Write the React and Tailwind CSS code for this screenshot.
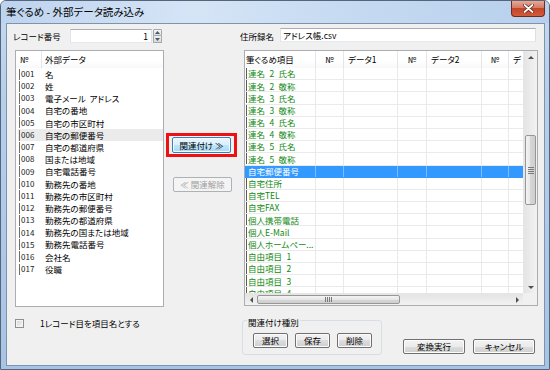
import React from "react";

const FONT = "font-['Noto_Sans_CJK_JP',sans-serif] [font-feature-settings:'palt']";

const leftRows = [
  ["001", "名"], ["002", "姓"], ["003", "電子メール アドレス"], ["004", "自宅の番地"],
  ["005", "自宅の市区町村"], ["006", "自宅の郵便番号"], ["007", "自宅の都道府県"],
  ["008", "国または地域"], ["009", "自宅電話番号"], ["010", "勤務先の番地"],
  ["011", "勤務先の市区町村"], ["012", "勤務先の郵便番号"], ["013", "勤務先の都道府県"],
  ["014", "勤務先の国または地域"], ["015", "勤務先電話番号"], ["016", "会社名"], ["017", "役職"],
];

const rightRows = [
  "連名 2 氏名", "連名 2 敬称", "連名 3 氏名", "連名 3 敬称", "連名 4 氏名", "連名 4 敬称",
  "連名 5 氏名", "連名 5 敬称", "自宅郵便番号", "自宅住所", "自宅TEL", "自宅FAX",
  "個人携帯電話", "個人E-Mail", "個人ホームペー...", "自由項目 1", "自由項目 2", "自由項目 3", "自由項目 4",
];

const cols = [71, 28, 54, 29, 55, 27, 55];
const headers = [
  { t: "筆ぐるめ項目", c: "pl-[1px]" },
  { t: "№", c: "justify-center" },
  { t: "データ1", c: "pl-[4px]" },
  { t: "№", c: "justify-center" },
  { t: "データ2", c: "pl-[4px]" },
  { t: "№", c: "justify-center" },
  { t: "デ", c: "pl-[4px]" },
];

const BTN =
  "flex items-center justify-center rounded-[2px] border border-[#707070] bg-[linear-gradient(#f2f2f2,#ebebeb_50%,#dddddd_50%,#cfcfcf)] text-[8.5px] text-black shadow-[inset_0_0_0_1px_#fcfcfc]";

function Tri({ dir }) {
  const pts = {
    up: "0,4 3,1 6,4",
    down: "0,1 3,4 6,1",
    left: "4,0 1,3 4,6",
    right: "1,0 4,3 1,6",
  }[dir];
  const w = dir === "up" || dir === "down" ? 6 : 5;
  const h = dir === "up" || dir === "down" ? 5 : 6;
  return (
    <svg width={w} height={h} viewBox={`0 0 ${w} ${h}`}>
      <polygon points={pts} fill="#505050" />
    </svg>
  );
}

function VScroll() {
  return (
    <div className="w-[14px] h-full flex flex-col shrink-0 bg-[linear-gradient(to_right,#e4e4e4,#f2f2f2)] border-l border-[#e6e6e6]">
      <div className="h-[12px] flex items-center justify-center shrink-0">
        <Tri dir="up" />
      </div>
      <div className="flex-1">
        <div className="mt-[72px] mx-[1px] h-[70px] rounded-[2px] border border-[#979797] bg-[linear-gradient(to_right,#f4f4f4,#e6e6e6_50%,#d6d6d6_50%,#cfcfcf)] flex flex-col items-center justify-center gap-[1px]">
          <div className="w-[6px] h-[1px] bg-[#7a7a7a]" />
          <div className="w-[6px] h-[1px] bg-[#7a7a7a]" />
          <div className="w-[6px] h-[1px] bg-[#7a7a7a]" />
          <div className="w-[6px] h-[1px] bg-[#7a7a7a]" />
        </div>
      </div>
      <div className="h-[12px] flex items-center justify-center shrink-0">
        <Tri dir="down" />
      </div>
    </div>
  );
}

function HScroll() {
  return (
    <div className="w-[278px] h-full flex items-stretch bg-[linear-gradient(#e4e4e4,#f2f2f2)] border-t border-[#e6e6e6]">
      <div className="w-[12px] flex items-center justify-center shrink-0">
        <Tri dir="left" />
      </div>
      <div className="flex-1 flex items-stretch py-[1px]">
        <div className="w-[143px] rounded-[2px] border border-[#979797] bg-[linear-gradient(#f4f4f4,#e6e6e6_50%,#d6d6d6_50%,#cfcfcf)] flex items-center justify-center gap-[1px]">
          <div className="w-[1px] h-[5px] bg-[#7a7a7a]" />
          <div className="w-[1px] h-[5px] bg-[#7a7a7a]" />
          <div className="w-[1px] h-[5px] bg-[#7a7a7a]" />
          <div className="w-[1px] h-[5px] bg-[#7a7a7a]" />
        </div>
      </div>
      <div className="w-[12px] flex items-center justify-center shrink-0">
        <Tri dir="right" />
      </div>
    </div>
  );
}

function LeftList() {
  return (
    <div className="ml-[8px] w-[149px] h-[257px] shrink-0 border border-[#abadb3] bg-white flex flex-col overflow-hidden">
      <div className="h-[17px] flex shrink-0 bg-[linear-gradient(#ffffff,#ffffff_60%,#f7f8f9)]">
        <div className="w-[26px] border-r border-[#e3e6ea] pl-[4px] flex items-center">№</div>
        <div className="flex-1 pl-[3px] flex items-center">外部データ</div>
      </div>
      {leftRows.map(([n, t], i) => (
        <div
          key={n}
          className={`flex items-center h-[12.2px] ml-[2px] shrink-0 ${i === 5 ? "bg-[#ebebeb]" : ""}`}
        >
          <span className="ml-[1px] w-[1px] h-[11px] bg-[#6e6e6e]" />
          <span className="ml-[1px] w-[24px] text-[8px] text-[#222]">{n}</span>
          <span className="[word-spacing:2px]">{t}</span>
        </div>
      ))}
    </div>
  );
}

function RightList() {
  return (
    <div className="w-[294px] h-[256px] shrink-0 border border-[#abadb3] bg-white flex flex-col">
      <div className="flex h-[242px]">
        <div className="w-[278px] overflow-hidden flex flex-col">
          <div className="h-[17px] flex shrink-0 bg-[linear-gradient(#ffffff,#ffffff_60%,#f7f8f9)]">
            {headers.map((h, i) => (
              <div
                key={i}
                style={{ width: cols[i] }}
                className={`shrink-0 flex items-center border-r border-[#e3e6ea] whitespace-nowrap ${h.c}`}
              >
                {h.t}
              </div>
            ))}
          </div>
          {rightRows.map((t, r) => {
            const sel = r === 8;
            return (
              <div
                key={r}
                className={`flex h-[12.2px] shrink-0 border-b ${sel ? "bg-[#3399ff] text-white border-[#3399ff]" : "border-[#eaeaea] text-[#128a12]"}`}
              >
                {cols.map((w, i) => (
                  <div
                    key={i}
                    style={{ width: w }}
                    className={`shrink-0 h-full flex items-center whitespace-nowrap border-r ${sel ? "border-[#7dbdff]" : "border-[#eaeaea]"}`}
                  >
                    {i === 0 && (
                      <>
                        <span className={`ml-[1px] w-[1px] h-[11px] ${sel ? "bg-[#3399ff]" : "bg-[#5a5a5a]"}`} />
                        <span className="ml-[1px] whitespace-pre [word-spacing:2.5px]">{t}</span>
                      </>
                    )}
                  </div>
                ))}
              </div>
            );
          })}
        </div>
        <VScroll />
      </div>
      <div className="flex h-[12px] shrink-0">
        <HScroll />
        <div className="w-[14px] bg-[#f0f0f0]" />
      </div>
    </div>
  );
}

export default function App() {
  return (
    <div className={`w-[550px] h-[370px] ${FONT} text-[8.5px] leading-none text-black`}>
      <div className="w-full h-full flex flex-col rounded-t-[6px] border border-[#55657b] bg-[linear-gradient(to_bottom,#c6daf1,#b6cfeb_25%,#a8c4e5)] overflow-hidden">
        {/* title bar */}
        <div className="h-[22px] flex items-start justify-between shrink-0 bg-[linear-gradient(to_right,#bdd3ee,#d6e5f6_35%,#c7dbf2_60%,#b8d0ed)]">
          <div className="h-[22px] flex items-center pl-[5px] text-[10.5px] text-black">
            筆ぐるめ - 外部データ読み込み
          </div>
          <div className="mr-[4px] w-[34px] h-[16px] rounded-b-[4px] border border-t-0 border-[#6b2a22] bg-[linear-gradient(#e9a995,#d47a62_45%,#c2462b_50%,#d45a3a)] flex items-center justify-center">
            <svg width="11" height="9" viewBox="0 0 11 9">
              <path d="M1.5 1 L9.5 8 M9.5 1 L1.5 8" stroke="#5a2018" strokeWidth="3.2" strokeLinecap="round" />
              <path d="M1.5 1 L9.5 8 M9.5 1 L1.5 8" stroke="#ffffff" strokeWidth="1.8" strokeLinecap="round" />
            </svg>
          </div>
        </div>

        {/* client area */}
        <div className="ml-[5px] mr-[4px] mb-[3px] flex-1 border border-[#7f93ac] bg-[#f0f0f0] flex flex-col">
          {/* row 1 */}
          <div className="h-[26px] flex items-start shrink-0">
            <div className="ml-[6px] w-[57px] h-[14px] mt-[5px] flex items-center">レコード番号</div>
            <div className="w-[82px] h-[14px] mt-[5px] border border-[#abadb3] border-l-[#e2e3ea] border-r-[#dbdfe6] border-b-[#e3e9ef] bg-white flex items-center justify-end pr-[3px]">
              1
            </div>
            <div className="ml-[1px] w-[9px] h-[14px] mt-[5px] flex flex-col">
              <div className="h-[7px] border border-[#a4a9b0] rounded-t-[1px] bg-[linear-gradient(#f7f7f7,#dedede)] flex items-center justify-center">
                <svg width="5" height="3" viewBox="0 0 5 3"><polygon points="0,3 2.5,0 5,3" fill="#4a5a70" /></svg>
              </div>
              <div className="h-[7px] border border-t-0 border-[#a4a9b0] rounded-b-[1px] bg-[linear-gradient(#f0f0f0,#d8d8d8)] flex items-center justify-center">
                <svg width="5" height="3" viewBox="0 0 5 3"><polygon points="0,0 2.5,3 5,0" fill="#4a5a70" /></svg>
              </div>
            </div>
            <div className="ml-[78px] w-[40px] h-[14px] mt-[5px] flex items-center">住所録名</div>
            <div className="w-[256px] h-[14px] mt-[4px] border border-[#abadb3] border-l-[#e2e3ea] border-r-[#dbdfe6] border-b-[#e3e9ef] bg-white flex items-center pl-[2px]">
              アドレス帳.csv
            </div>
          </div>

          {/* row 2 */}
          <div className="h-[257px] flex items-start shrink-0">
            <LeftList />
            <div className="w-[80px] shrink-0 pt-[83px] flex flex-col items-start">
              <div className="ml-[2px] border-[3px] border-[#ee1111] px-[3px] py-[1px]">
                <div className="w-[59px] h-[16px] flex items-center justify-center rounded-[2px] border border-[#3c7fb1] bg-[linear-gradient(#eaf6fd,#d9f0fc_50%,#bee6fd_50%,#a7d9f5)] shadow-[inset_0_0_0_1px_#f4fbff]">
                  関連付け ≫
                </div>
              </div>
              <div className="mt-[20px] ml-[9px] w-[59px] h-[15px] flex items-center justify-center rounded-[2px] border border-[#adb2b5] bg-[#f4f4f4] text-[#a0a0a0]">
                ≪ 関連解除
              </div>
            </div>
            <RightList />
          </div>

          {/* row 3 */}
          <div className="flex items-start flex-1">
            <div className="w-[235px] shrink-0 flex items-center mt-[12px] h-[9px]">
              <div className="ml-[8px] w-[9px] h-[9px] border border-[#8e8f8f] bg-[linear-gradient(135deg,#d5d5d5,#f6f6f6)] shadow-[inset_0_0_0_1px_#f4f4f4]" />
              <div className="ml-[16px]">1レコード目を項目名とする</div>
            </div>
            <div className="relative w-[140px] h-[35px] mt-[13px] shrink-0 rounded-[3px] border border-[#d5dfe5] flex items-start pt-[12px] pl-[10px] gap-[7px]">
              <div className="absolute -top-[5px] left-[4px] px-[1px] h-[12px] flex items-center bg-[#f0f0f0]">
                関連付け種別
              </div>
              <div className={`${BTN} w-[35px] h-[15px]`}>選択</div>
              <div className={`${BTN} w-[35px] h-[15px]`}>保存</div>
              <div className={`${BTN} w-[35px] h-[15px]`}>削除</div>
            </div>
            <div className={`${BTN} ml-[21px] mt-[32px] w-[62px] h-[15px] shrink-0`}>変換実行</div>
            <div className={`${BTN} ml-[8px] mt-[32px] w-[62px] h-[15px] shrink-0`}>キャンセル</div>
          </div>
        </div>
      </div>
    </div>
  );
}
